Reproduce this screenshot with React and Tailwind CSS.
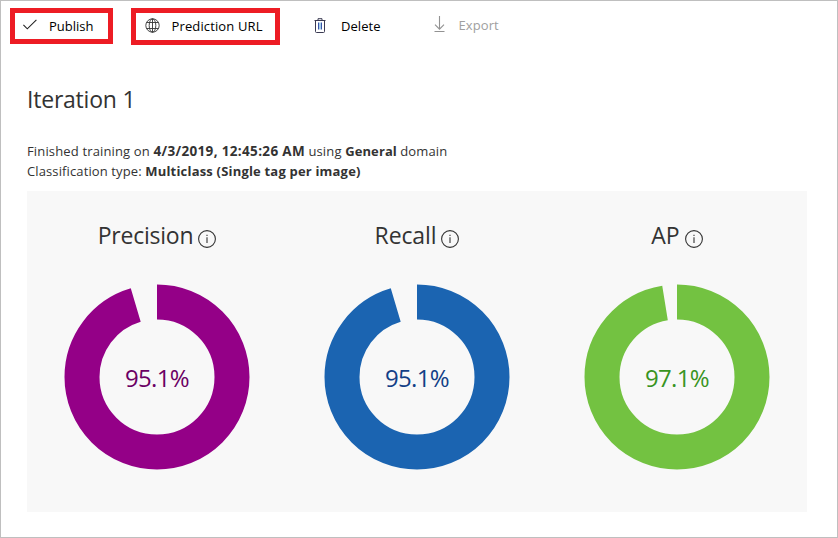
const metrics = [
  { name: "Precision", value: "95.1%", fraction: 0.9525, ring: "#940087", text: "text-[#6b0064]", tracking: "tracking-[-0.22px]" },
  { name: "Recall", value: "95.1%", fraction: 0.9525, ring: "#1b64b1", text: "text-[#123f87]", tracking: "tracking-[-0.1px]" },
  { name: "AP", value: "97.1%", fraction: 0.9728, ring: "#73c241", text: "text-[#38941f]", tracking: "tracking-[0px]" },
];

function CheckIcon() {
  return (
    <svg width="14" height="12" viewBox="0 0 14 12" fill="none" stroke="#222" strokeWidth="1.1">
      <path d="M0.4 5.9 4.3 9.8 13.4 0.8" />
    </svg>
  );
}

function GlobeIcon() {
  return (
    <svg width="15" height="15" viewBox="0 0 15 15" fill="none" stroke="#333" strokeWidth="0.9">
      <circle cx="7.5" cy="7.5" r="6.7" />
      <ellipse cx="7.5" cy="7.5" rx="3.3" ry="6.7" />
      <path d="M7.5 0.8v13.4M1.6 4.5h11.8M1.6 10.5h11.8" />
    </svg>
  );
}

function TrashIcon() {
  return (
    <svg width="12" height="15" viewBox="0 0 12 15" fill="none" stroke="#3a3a52" strokeWidth="1">
      <path d="M0.5 2.5h11M4 2.3V0.7h4v1.6M1.5 2.5v11q0 1 1 1h7q1 0 1-1v-11" />
      <path d="M4.5 4.5v7M7.5 4.5v7" stroke="#3a55a8" />
      <path d="M6 4.5v7" stroke="#4a9cd6" />
    </svg>
  );
}

function ExportIcon() {
  return (
    <svg width="11" height="17" viewBox="0 0 11 17" fill="none" stroke="#929292" strokeWidth="1.1">
      <path d="M5.5 0v13M1 8.7l4.5 4.5L10 8.7M0.5 15.5h10" />
    </svg>
  );
}

function InfoIcon() {
  return (
    <svg width="18" height="18" viewBox="0 0 18 18" fill="none" stroke="#333" strokeWidth="1.1">
      <circle cx="9" cy="9" r="8.4" />
      <path d="M9 7.3v5.6M9 4.7v1.3" />
    </svg>
  );
}

function Donut({ fraction, color }) {
  const length = 2 * Math.PI * 75;
  return (
    <svg className="col-start-1 row-start-1" width="186" height="186" viewBox="0 0 186 186">
      <circle
        cx="93"
        cy="93"
        r="75"
        fill="none"
        stroke={color}
        strokeWidth="35"
        strokeDasharray={`${length * fraction} ${length}`}
        transform="rotate(-90 93 93)"
      />
    </svg>
  );
}

export default function App() {
  return (
    <main className="h-[538px] w-[838px] overflow-hidden border border-[#bfbfbf] bg-white font-['Open_Sans','Noto_Sans',sans-serif] text-[#333]">
      <nav className="flex h-[45px] items-start pl-[9px] pt-[7px] text-[13px] leading-[18px] text-black">
        <button className="flex h-9 w-[103px] border-5 border-[#ed1c24] pl-2">
          <span className="mt-[6px] w-[26px]"><CheckIcon /></span>
          <span className="mt-[4px] whitespace-nowrap">Publish</span>
        </button>
        <button className="ml-[18px] flex h-[37px] w-[149px] border-5 border-[#ed1c24] pl-[9px]">
          <span className="mt-[5px] w-[26.5px] shrink-0"><GlobeIcon /></span>
          <span className="mt-[4px] whitespace-nowrap tracking-[0.13px]">Prediction URL</span>
        </button>
        <button className="ml-[34px] flex">
          <span className="mt-[10px] w-[27px]"><TrashIcon /></span>
          <span className="mt-[9px] w-[93px] text-left tracking-[0.05px]">Delete</span>
        </button>
        <button className="flex text-[#a0a0a0]">
          <span className="mt-2 w-[24.5px]"><ExportIcon /></span>
          <span className="mt-2 tracking-[0.1px]">Export</span>
        </button>
      </nav>
      <section className="ml-[26px] w-[780px]">
        <h1 className="mt-[37px] h-[33px] text-[23px] leading-[32px] tracking-[-0.22px]">Iteration 1</h1>
        <div className="mt-[25px] h-[50px] text-[13px] leading-5 whitespace-nowrap">
          <p className="h-5">
            <span className="tracking-[0.15px]">Finished training on </span>
            <b className="text-[13.5px] tracking-[0.34px]">4/3/2019, 12:45:26 AM</b>{" "}
            <span className="tracking-[0.15px]">using </span>
            <b className="tracking-[0.1px]">General</b>{" "}
            <span className="tracking-[0.1px]">domain</span>
          </p>
          <p>
            <span className="tracking-[0.12px]">Classification type: </span>
            <b className="tracking-[0.19px]">Multiclass (Single tag per image)</b>
          </p>
        </div>
        <div className="grid h-[321px] grid-cols-3 bg-[#f8f8f8]">
          {metrics.map((metric) => (
            <article key={metric.name} className="flex flex-col items-center">
              <div className="mt-[27px] flex h-[34px] gap-[5px]">
                <h2 className={`text-[23px] leading-[34px] ${metric.tracking}`}>{metric.name}</h2>
                <span className="mt-[12px]"><InfoIcon /></span>
              </div>
              <div className="mt-[32px] grid place-items-center">
                <Donut fraction={metric.fraction} color={metric.ring} />
                <span className={`col-start-1 row-start-1 pt-[1px] text-[24px] leading-8 font-medium tracking-[-0.7px] ${metric.text}`}>{metric.value}</span>
              </div>
            </article>
          ))}
        </div>
      </section>
    </main>
  );
}
